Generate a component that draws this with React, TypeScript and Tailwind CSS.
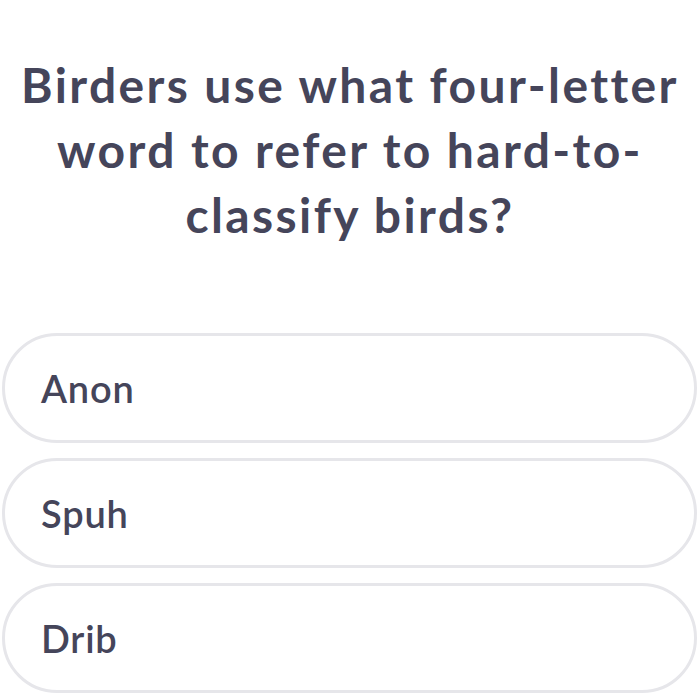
import React from "react";

export default function App() {
  const options = ["Anon", "Spuh", "Drib"];
  return (
    <div
      className="w-[700px] h-[700px] bg-white overflow-hidden"
      style={{ fontFamily: "Lato, 'Noto Sans', sans-serif" }}
    >
      <h1 className="pt-[52px] text-center text-[48px] leading-[65px] font-bold text-[#45455a] tracking-[2.4px]">
        Birders use what four-letter
        <br />
        word to refer to hard-to-
        <br />
        classify birds?
      </h1>
      <div className="mt-[86px] flex flex-col gap-[15px] px-[2px]">
        {options.map((o) => (
          <div
            key={o}
            className="h-[110px] w-[695px] rounded-full border-[3px] border-[#e6e6ea] flex items-center pl-[36px] text-[38px] font-semibold text-[#45455a] tracking-[0.8px]"
          >
            {o}
          </div>
        ))}
      </div>
    </div>
  );
}
